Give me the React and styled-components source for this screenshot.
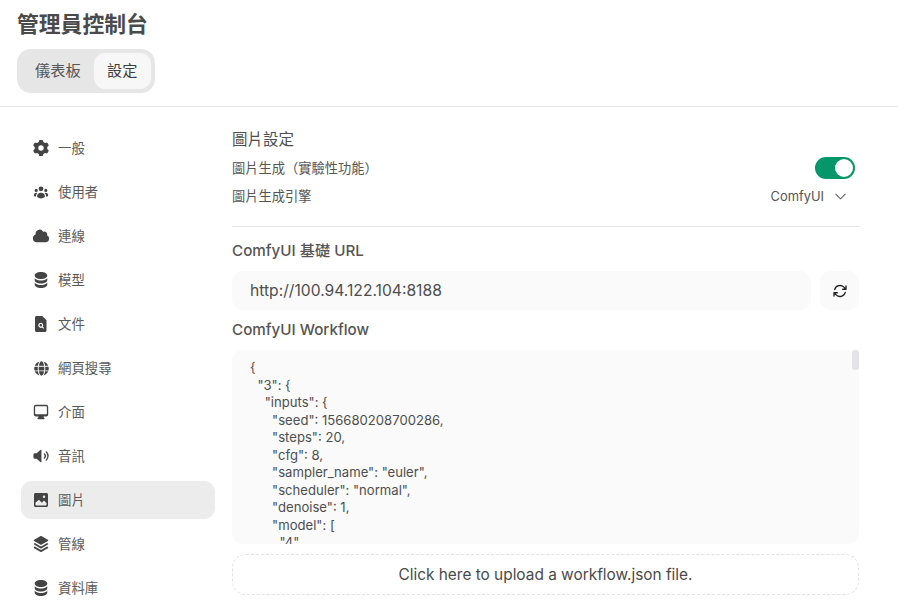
import React from 'react';
import styled, { createGlobalStyle } from 'styled-components';
import {
  HiMiniCog6Tooth, HiMiniUserGroup, HiMiniCloud, HiMiniCircleStack,
  HiMiniComputerDesktop, HiMiniSpeakerWave, HiMiniSquare3Stack3D,
  HiChevronDown, HiOutlineArrowPath,
} from 'react-icons/hi2';
import { FaGlobe } from 'react-icons/fa';

const FONT = `Inter, "Noto Sans CJK TC", "Noto Sans CJK SC", sans-serif`;

const Global = createGlobalStyle`
  html, body { margin: 0; padding: 0; background: #fff; height: 100%; overflow: hidden; }
  * { box-sizing: border-box; }
  body { font-family: ${FONT}; color: #4b4b4b; }
`;

const Page = styled.div`height: 603px; overflow: hidden; display: flex; flex-direction: column;`;
const Header = styled.header`
  flex: none; height: 107px; padding: 10px 17px 0; border-bottom: 1px solid #e5e5e5;
`;
const Title = styled.h1`
  margin: 0; font-size: 21.8px; line-height: 29px; font-weight: 600; color: #4a4a4a;
`;
const Tabs = styled.nav`
  display: inline-flex; margin-top: 10px; padding: 4px; height: 44px;
  background: #e6e6e6; border-radius: 14px;
`;
const Tab = styled.div`
  display: flex; align-items: center; justify-content: center; height: 36px; padding-bottom: 4px;
  padding-left: ${p => (p.$active ? '13.5px' : '14px')};
  padding-right: ${p => (p.$active ? '13.5px' : '13px')};
  font-size: 15.2px; border-radius: 11px;
  color: ${p => (p.$active ? '#3f3f3f' : '#555')};
  background: ${p => (p.$active ? '#f7f7f7' : 'transparent')};
`;
const Body = styled.div`flex: 1; min-height: 0; display: flex; overflow: hidden;`;
const Sidebar = styled.aside`
  flex: none; width: 194px; margin-left: 21px; padding-top: 22px;
  display: flex; flex-direction: column; gap: 6px;
`;
const NavItem = styled.div`
  flex: none; height: 38px; display: flex; align-items: center; gap: 8px; padding: 0 0 2px 11px;
  font-size: 13.4px; color: #5a5a5a; border-radius: 11px;
  background: ${p => (p.$active ? '#ececec' : 'transparent')};
  svg { width: 18px; height: 18px; margin-top: 2px; color: #444; flex: none; }
`;
const UsersIcon = styled(HiMiniUserGroup)`
  && { width: 16px; height: 16px; margin: 2px 1px 0; }
`;
const GlobeIcon = styled(FaGlobe)`
  && { width: 15px; height: 15px; margin: 2px 1.5px 0; }
`;
const Content = styled.main`
  flex: none; width: 627px; margin-left: 17px; padding-top: 22px;
  display: flex; flex-direction: column;
`;
const Heading = styled.div`font-size: 15.5px; line-height: 22px; margin-bottom: 3px; color: #4e4e4e;`;
const Row = styled.div`
  display: flex; align-items: center; justify-content: space-between; height: 28px;
  font-size: 13.25px; color: #555;
`;
const RowLabel = styled.span`margin-bottom: 2px;`;
const Toggle = styled.div`
  width: 40px; height: 22px; margin-right: 4px; border-radius: 11px; background: #059669;
  display: flex; align-items: center; justify-content: flex-end; padding: 0 2px;
  &::after { content: ''; width: 18px; height: 18px; border-radius: 50%; background: #fff; }
`;
const Select = styled.div`
  display: flex; align-items: center; gap: 9px; margin-right: 11px;
  font-size: 12.9px; color: #555;
  svg { width: 15px; height: 15px; color: #555; }
`;
const Divider = styled.hr`
  margin: 16px 0 13px; border: 0; border-top: 1px solid #e5e5e5;
`;
const Label = styled.div`font-size: 15.2px; line-height: 22px; font-weight: 500; color: #555;`;
const UrlRow = styled.div`display: flex; gap: 9px; margin: 9px 0 9px;`;
const Input = styled.input`
  flex: 1; min-width: 0; height: 39px; padding: 0 18px; border: 0; outline: 0;
  border-radius: 11px; background: #fafafa; font: 400 15.65px ${FONT}; color: #4e4e4e;
`;
const IconButton = styled.button`
  flex: none; width: 39px; height: 39px; padding: 0; border: 0; border-radius: 11px;
  background: #fafafa; color: #222; display: flex; align-items: center; justify-content: center;
  svg { width: 16px; height: 16px; stroke-width: 2; }
`;
const WorkflowBox = styled.div`position: relative; margin-top: 9px; height: 194px;`;
const Workflow = styled.textarea`
  display: block; width: 100%; height: 194px; padding: 9px 18px;
  border: 0; outline: 0; resize: none; overflow: hidden; border-radius: 11px;
  background: #fafafa; color: #4e4e4e; font: 400 13.1px/17.5px ${FONT};
`;
const ScrollThumb = styled.div`
  position: absolute; top: 0; right: 0; width: 7px; height: 20px; border-radius: 3px; background: #e3e3e8;
`;
const Upload = styled.div`
  height: 41px; margin-top: 10px; border: 1px dashed #e2e2e2; border-radius: 14px;
  display: flex; align-items: center; justify-content: center; font-size: 15.4px; color: #4a4a4a;
`;

const DocSearchIcon = () => (
  <svg viewBox="0 0 18 18" aria-hidden="true">
    <path
      fill="currentColor"
      fillRule="evenodd"
      d="M4.500 1h5.200c.3 0 .6.1.8.3l3.700 3.700c.2.2.3.5.3.8v9.700c0 .8-.7 1.500-1.500 1.500h-8.500c-.8 0-1.500-.7-1.500-1.500v-13c0-.8.7-1.500 1.500-1.500zM8.800 7.800a2.500 2.500 0 0 0-1.800 4.300 2.500 2.500 0 0 0 3 .4l1.300 1.300.8-.8-1.300-1.300a2.500 2.500 0 0 0-2-3.900zm0 1.200a1.300 1.300 0 1 1 0 2.600 1.300 1.300 0 0 1 0-2.600z"
    />
  </svg>
);

const PhotoIcon = () => (
  <svg viewBox="0 0 18 18" aria-hidden="true">
    <path
      fill="currentColor"
      fillRule="evenodd"
      d="M3.500 2h11c.8 0 1.500.7 1.500 1.500v11c0 .8-.7 1.500-1.500 1.500h-11c-.8 0-1.500-.7-1.500-1.500v-11c0-.8.7-1.500 1.500-1.500zM3.500 11.500v2.200c0 .4.3.8.8.8h9.400c.5 0 .8-.4.8-.8v-1.700l-2.500-2.500-2.200 2.200-2.800-3zM12 4.500a1.200 1.200 0 1 0 0 2.400 1.200 1.200 0 0 0 0-2.400z"
    />
  </svg>
);

const NAV = [
  ['一般', HiMiniCog6Tooth], ['使用者', UsersIcon], ['連線', HiMiniCloud], ['模型', HiMiniCircleStack],
  ['文件', DocSearchIcon], ['網頁搜尋', GlobeIcon], ['介面', HiMiniComputerDesktop],
  ['音訊', HiMiniSpeakerWave], ['圖片', PhotoIcon], ['管線', HiMiniSquare3Stack3D], ['資料庫', HiMiniCircleStack],
];

const node = (inputs, class_type, title) => ({ inputs, class_type, _meta: { title } });
const WORKFLOW = JSON.stringify({
  3: node({ seed: 156680208700286, steps: 20, cfg: 8, sampler_name: 'euler', scheduler: 'normal', denoise: 1,
    model: ['4', 0], positive: ['6', 0], negative: ['7', 0], latent_image: ['5', 0] }, 'KSampler', 'KSampler'),
  4: node({ ckpt_name: 'model.safetensors' }, 'CheckpointLoaderSimple', 'Load Checkpoint'),
  5: node({ width: 512, height: 512, batch_size: 1 }, 'EmptyLatentImage', 'Empty Latent Image'),
  6: node({ text: 'Prompt', clip: ['4', 1] }, 'CLIPTextEncode', 'CLIP Text Encode (Prompt)'),
  7: node({ text: '', clip: ['4', 1] }, 'CLIPTextEncode', 'CLIP Text Encode (Prompt)'),
  8: node({ samples: ['3', 0], vae: ['4', 2] }, 'VAEDecode', 'VAE Decode'),
  9: node({ filename_prefix: 'ComfyUI', images: ['8', 0] }, 'SaveImage', 'Save Image'),
}, null, 2);

export default function App() {
  return (
    <Page>
      <Global />
      <Header>
        <Title>管理員控制台</Title>
        <Tabs>
          <Tab>儀表板</Tab>
          <Tab $active>設定</Tab>
        </Tabs>
      </Header>
      <Body>
        <Sidebar>
          {NAV.map(([label, Icon]) => (
            <NavItem key={label} $active={label === '圖片'}><Icon />{label}</NavItem>
          ))}
        </Sidebar>
        <Content>
          <Heading>圖片設定</Heading>
          <Row><RowLabel>圖片生成（實驗性功能）</RowLabel><Toggle /></Row>
          <Row><RowLabel>圖片生成引擎</RowLabel><Select>ComfyUI<HiChevronDown /></Select></Row>
          <Divider />
          <Label>ComfyUI 基礎 URL</Label>
          <UrlRow>
            <Input readOnly value="http://100.94.122.104:8188" />
            <IconButton><HiOutlineArrowPath /></IconButton>
          </UrlRow>
          <Label>ComfyUI Workflow</Label>
          <WorkflowBox>
            <Workflow readOnly value={WORKFLOW} />
            <ScrollThumb />
          </WorkflowBox>
          <Upload>Click here to upload a workflow.json file.</Upload>
        </Content>
      </Body>
    </Page>
  );
}
